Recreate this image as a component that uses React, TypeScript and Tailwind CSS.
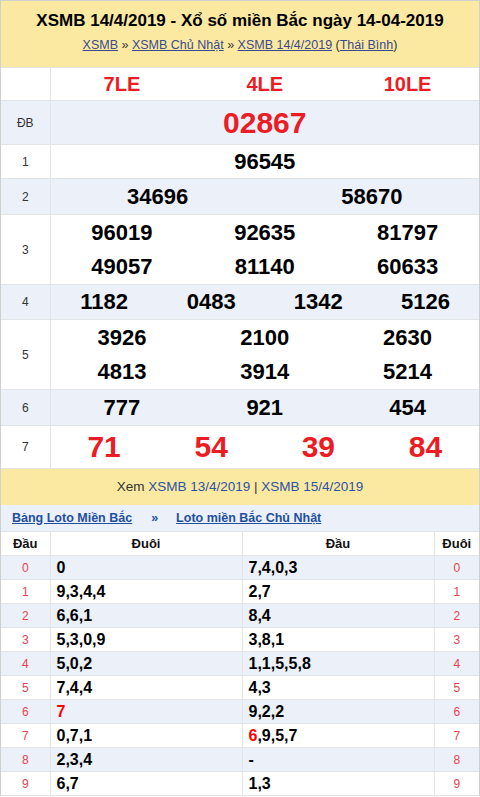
import React from "react";

type Prize = {
    label: string;
    cols: number;
    values: string[];
    big?: boolean;
    red?: boolean;
    bg: boolean;
    h: string;
};

const prizes: Prize[] = [
    { label: "ĐB", cols: 1, values: ["02867"], big: true, red: true, bg: true, h: "h-[44px]" },
    { label: "1", cols: 1, values: ["96545"], bg: false, h: "h-[34px]" },
    { label: "2", cols: 2, values: ["34696", "58670"], bg: true, h: "h-[36px]" },
    { label: "3", cols: 3, values: ["96019", "92635", "81797", "49057", "81140", "60633"], bg: false, h: "h-[70px]" },
    { label: "4", cols: 4, values: ["1182", "0483", "1342", "5126"], bg: true, h: "h-[35px]" },
    { label: "5", cols: 3, values: ["3926", "2100", "2630", "4813", "3914", "5214"], bg: false, h: "h-[70px]" },
    { label: "6", cols: 3, values: ["777", "921", "454"], bg: true, h: "h-[36px]" },
    { label: "7", cols: 4, values: ["71", "54", "39", "84"], big: true, red: true, bg: false, h: "h-[43px]" },
];

const gridCols: Record<number, string> = {
    1: "grid-cols-1",
    2: "grid-cols-2",
    3: "grid-cols-3",
    4: "grid-cols-4",
};

const loto: { d: number; duoi: React.ReactNode; dau: React.ReactNode }[] = [
    { d: 0, duoi: "0", dau: "7,4,0,3" },
    { d: 1, duoi: "9,3,4,4", dau: "2,7" },
    { d: 2, duoi: "6,6,1", dau: "8,4" },
    { d: 3, duoi: "5,3,0,9", dau: "3,8,1" },
    { d: 4, duoi: "5,0,2", dau: "1,1,5,5,8" },
    { d: 5, duoi: "7,4,4", dau: "4,3" },
    { d: 6, duoi: <span className="text-[#ff0000]">7</span>, dau: "9,2,2" },
    { d: 7, duoi: "0,7,1", dau: <><span className="text-[#ff0000]">6</span>,9,5,7</> },
    { d: 8, duoi: "2,3,4", dau: "-" },
    { d: 9, duoi: "6,7", dau: "1,3" },
];

export default function App() {
    return (
        <div className="w-[480px] border-l border-t border-r border-[#cfcfcf] bg-white font-['Liberation_Sans',Arial,sans-serif] text-[#222]">
            <div className="flex h-[66px] flex-col items-center bg-[#fbe9a1] pt-[9px]">
                <h1 className="text-[17px] font-bold leading-[22px] text-black">
                    XSMB 14/4/2019 - Xổ số miền Bắc ngày 14-04-2019
                </h1>
                <p className="mt-[5px] text-[12.5px] leading-[16px] text-[#333]">
                    <a className="text-[#3a4a8c] underline">XSMB</a> »{" "}
                    <a className="text-[#3a4a8c] underline">XSMB Chủ Nhật</a> »{" "}
                    <a className="text-[#3a4a8c] underline">XSMB 14/4/2019</a> (
                    <a className="text-[#3a4a8c] underline">Thái Bình</a>)
                </p>
            </div>

            <table className="w-full border-collapse">
                <tbody>
                    <tr className="h-[33px] border-y border-[#e2e4e8]">
                        <td className="w-[49px] border-r border-[#e2e4e8]"></td>
                        <td className="p-0">
                            <div className="grid grid-cols-3 text-center text-[20px] font-bold leading-none text-[#ec1c24]">
                                <span>7LE</span>
                                <span>4LE</span>
                                <span>10LE</span>
                            </div>
                        </td>
                    </tr>
                    {prizes.map((p) => (
                        <tr
                            key={p.label}
                            className={`${p.h} border-b border-[#e2e4e8] ${p.bg ? "bg-[#ebf0f9]" : "bg-white"}`}
                        >
                            <td className="w-[49px] border-r border-[#e2e4e8] text-center text-[12px] text-[#333]">
                                {p.label}
                            </td>
                            <td className="p-0">
                                <div
                                    className={`grid ${gridCols[p.cols]} gap-y-[12px] text-center font-bold leading-none ${
                                        p.big ? "text-[30px]" : "text-[22px]"
                                    } ${p.red ? "text-[#ec1c24]" : "text-black"}`}
                                >
                                    {p.values.map((v, i) => (
                                        <span key={i}>{v}</span>
                                    ))}
                                </div>
                            </td>
                        </tr>
                    ))}
                </tbody>
            </table>

            <div className="flex h-[36px] items-center justify-center bg-[#fbe9a1] text-[13.5px] text-[#333]">
                Xem&nbsp;<a className="text-[#2c54a4]">XSMB 13/4/2019</a>&nbsp;|&nbsp;
                <a className="text-[#2c54a4]">XSMB 15/4/2019</a>
            </div>

            <div className="flex h-[26px] items-center bg-[#ebf0f9] pl-[11px] text-[12.5px] font-bold">
                <a className="text-[#1f4f9f] underline">Bảng Loto Miền Bắc</a>
                <span className="ml-[19px] text-[#1f4f9f]">»</span>
                <a className="ml-[18px] text-[#1f4f9f] underline">Loto miền Bắc Chủ Nhật</a>
            </div>

            <table className="w-full table-fixed border-collapse">
                <colgroup>
                    <col className="w-[49px]" />
                    <col className="w-[192px]" />
                    <col className="w-[192px]" />
                    <col />
                </colgroup>
                <thead>
                    <tr className="h-[24px] border-y border-[#e2e4e8] bg-white text-[13px] font-bold leading-none text-[#111]">
                        <th className="border-r border-[#e2e4e8]">Đầu</th>
                        <th className="border-r border-[#e2e4e8]">Đuôi</th>
                        <th className="border-r border-[#e2e4e8]">Đầu</th>
                        <th>Đuôi</th>
                    </tr>
                </thead>
                <tbody>
                    {loto.map((r) => (
                        <tr
                            key={r.d}
                            className={`h-[24px] border-b border-[#e2e4e8] ${r.d % 2 === 0 ? "bg-[#ebf0f9]" : "bg-white"}`}
                        >
                            <td className="border-r border-[#e2e4e8] text-center text-[12px] leading-none text-[#e8434b]">
                                {r.d}
                            </td>
                            <td className="border-r border-[#e2e4e8] pl-[6px] text-[16px] font-bold leading-none text-black">
                                {r.duoi}
                            </td>
                            <td className="border-r border-[#e2e4e8] pl-[6px] text-[16px] font-bold leading-none text-black">
                                {r.dau}
                            </td>
                            <td className="text-center text-[12px] leading-none text-[#e8434b]">{r.d}</td>
                        </tr>
                    ))}
                </tbody>
            </table>
        </div>
    );
}
